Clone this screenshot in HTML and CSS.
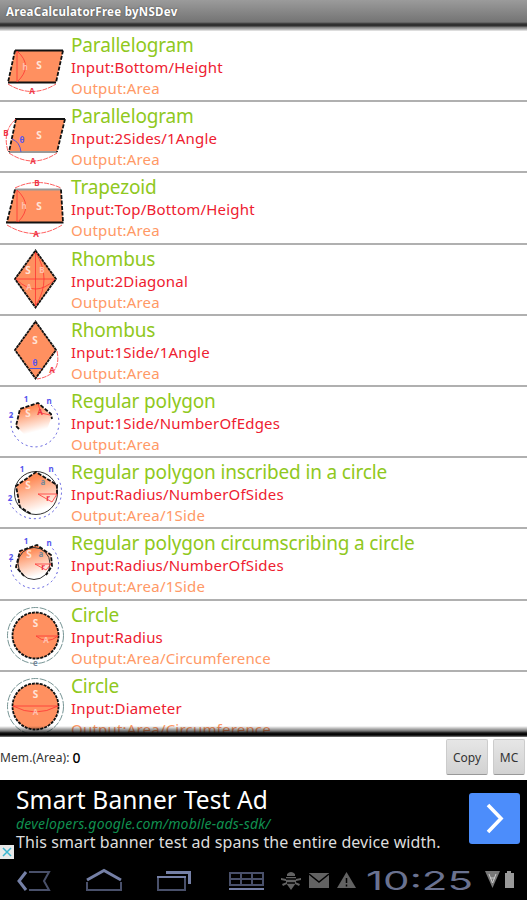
FILE: index.html
```html
<!DOCTYPE html>
<html lang="en">
<head>
    <meta charset="UTF-8">
    <meta name="viewport" content="width=device-width, initial-scale=1.0">
    <title>AreaCalculatorFree byNSDev</title>
    <link rel="stylesheet" href="styles.css">
</head>
<body>
    <header class="title-bar">AreaCalculatorFree byNSDev</header>

    <ul class="shapes">
        <li class="shape">
            <svg class="figure" viewBox="0 0 71 71">
                <path class="fill" d="M15 20.5H63L56 52.5H8Z"/>
                <path class="edge" d="M15 20.5H63M8 52.5H56"/>
                <path class="edge-dash" d="M15 20.5L8 52.5M63 20.5L56 52.5"/>
                <path class="red" d="M17 21V52M17 21Q34 36 17 52"/>
                <path class="red-dash" d="M8 54Q32 69 56 54"/>
                <text class="t-white" x="39" y="39">S</text>
                <text class="t-pink" x="25" y="40">h</text>
                <text class="t-red" x="32" y="64">A</text>
            </svg>
            <div class="info">
                <h2>Parallelogram</h2>
                <p class="input">Input:Bottom/Height</p>
                <p class="output">Output:Area</p>
            </div>
        </li>
        <li class="shape">
            <svg class="figure" viewBox="0 0 71 71">
                <path class="fill" d="M16 18H65L57 51H9Z"/>
                <path class="edge" d="M15 18H65"/>
                <path class="edge-gray" d="M9 51H57"/>
                <path class="edge-dash" d="M16 18L9 51M65 18L57 51"/>
                <path class="blue" d="M12 38Q20 41 21 51"/>
                <path class="red-dash" d="M9 52Q33 68 57 52M16 18Q2 30 8 50"/>
                <text class="t-white" x="39" y="38">S</text>
                <text class="t-blue" x="22" y="42">θ</text>
                <text class="t-red" x="6" y="35">B</text>
                <text class="t-red" x="33" y="63">A</text>
            </svg>
            <div class="info">
                <h2>Parallelogram</h2>
                <p class="input">Input:2Sides/1Angle</p>
                <p class="output">Output:Area</p>
            </div>
        </li>
        <li class="shape">
            <svg class="figure" viewBox="0 0 71 71">
                <path class="fill" d="M15 17.5H61L63 50H7Z"/>
                <path class="edge-gray" d="M15 17.5H61"/>
                <path class="edge" d="M6 50.5H63.5"/>
                <path class="edge-dash" d="M15 17.5L7 50M61 17.5L63 50"/>
                <path class="red" d="M17 18V50M17 18Q34 34 18 50"/>
                <path class="red-dash" d="M15 16Q37 5 61 16M7 53Q35 70 62 53"/>
                <text class="t-white" x="39" y="38">S</text>
                <text class="t-pink" x="24" y="37">h</text>
                <text class="t-red" x="37" y="14">B</text>
                <text class="t-red" x="36" y="65">A</text>
            </svg>
            <div class="info">
                <h2>Trapezoid</h2>
                <p class="input">Input:Top/Bottom/Height</p>
                <p class="output">Output:Area</p>
            </div>
        </li>
        <li class="shape">
            <svg class="figure" viewBox="0 0 71 71">
                <path class="fill" d="M35.5 6.5L56 35L35.5 63.5L15 35Z"/>
                <path class="edge-thin" d="M35.5 6.5L56 35L35.5 63.5L15 35Z"/>
                <path class="red" d="M35.5 8V62M16 35H55M36 9Q52 35 36 61M17 36Q36 54 54 36"/>
                <text class="t-white" x="28" y="30">S</text>
                <text class="t-pink" x="42" y="29">B</text>
                <text class="t-pink" x="29" y="46">A</text>
            </svg>
            <div class="info">
                <h2>Rhombus</h2>
                <p class="input">Input:2Diagonal</p>
                <p class="output">Output:Area</p>
            </div>
        </li>
        <li class="shape">
            <svg class="figure" viewBox="0 0 71 71">
                <path class="fill" d="M35.5 6.5L56 35L35.5 63.5L15 35Z"/>
                <path class="edge-thin" d="M35.5 6.5L56 35L35.5 63.5L15 35Z"/>
                <path class="blue" d="M30 53.5H41"/>
                <path class="red-dash" d="M57 36Q62 60 37 64"/>
                <text class="t-white" x="35" y="29">S</text>
                <text class="t-blue" x="35" y="51">θ</text>
                <text class="t-red" x="52" y="58">A</text>
            </svg>
            <div class="info">
                <h2>Rhombus</h2>
                <p class="input">Input:1Side/1Angle</p>
                <p class="output">Output:Area</p>
            </div>
        </li>
        <li class="shape">
            <svg class="figure" viewBox="0 0 71 71">
                <defs>
                    <linearGradient id="fade" x1="0.35" y1="0" x2="0.65" y2="1">
                        <stop offset="0.15" stop-color="#ff8a56"/>
                        <stop offset="0.9" stop-color="#fff"/>
                    </linearGradient>
                </defs>
                <path fill="url(#fade)" d="M16 40L20 23L38 17L52 30L46 46L24 48Z"/>
                <path class="edge-dash" d="M19 43L16 40L20 23L38 17L51 28L52 33"/>
                <path class="red" d="M38 18L41 27L50 29"/>
                <path class="blue-dot" d="M12 30A24 24 0 1 0 51 19"/>
                <text class="t-white" x="28" y="31">S</text>
                <text class="t-red" x="40" y="29">A</text>
                <text class="t-blue" x="26" y="16">1</text>
                <text class="t-blue" x="11" y="32">2</text>
                <text class="t-blue" x="49" y="18">n</text>
            </svg>
            <div class="info">
                <h2>Regular polygon</h2>
                <p class="input">Input:1Side/NumberOfEdges</p>
                <p class="output">Output:Area</p>
            </div>
        </li>
        <li class="shape">
            <svg class="figure" viewBox="0 0 71 71">
                <path fill="url(#fade)" d="M36 15L57 28V45L46 56L30 57L19 48L16 29Z"/>
                <circle class="ring" cx="36" cy="36" r="21.5"/>
                <path class="edge-dash" d="M57 37V28L36 15L16 29L20 50L31 57"/>
                <path class="red" d="M38 37H57M38 37L52 45L57 37"/>
                <path class="blue-dot" d="M10 46A27 27 0 1 0 54 16"/>
                <text class="t-white" x="28" y="32">S</text>
                <text class="t-gray" x="43" y="28">a</text>
                <text class="t-red" x="48" y="44">r</text>
                <text class="t-blue" x="22" y="15">1</text>
                <text class="t-blue" x="10" y="44">2</text>
                <text class="t-blue" x="51" y="15">n</text>
            </svg>
            <div class="info">
                <h2>Regular polygon inscribed in a circle</h2>
                <p class="input">Input:Radius/NumberOfSides</p>
                <p class="output">Output:Area/1Side</p>
            </div>
        </li>
        <li class="shape">
            <svg class="figure" viewBox="0 0 71 71">
                <path fill="url(#fade)" d="M16 39L20 23L37 17L51 27L52 38L44 49L27 51Z"/>
                <circle class="ring" cx="34" cy="35.5" r="16"/>
                <path class="edge-dash" d="M24 48L16 39L20 23L37 17L51 27L52 38L46 47"/>
                <path class="red" d="M35 36H51M35 36L46 42L51 36"/>
                <path class="blue-dot" d="M11 32A24 24 0 1 0 51 19"/>
                <text class="t-white" x="29" y="30">S</text>
                <text class="t-gray" x="41" y="29">a</text>
                <text class="t-red" x="43" y="42">r</text>
                <text class="t-blue" x="26" y="16">1</text>
                <text class="t-blue" x="11" y="32">2</text>
                <text class="t-blue" x="49" y="18">n</text>
            </svg>
            <div class="info">
                <h2>Regular polygon circumscribing a circle</h2>
                <p class="input">Input:Radius/NumberOfSides</p>
                <p class="output">Output:Area/1Side</p>
            </div>
        </li>
        <li class="shape">
            <svg class="figure" viewBox="0 0 71 71">
                <circle class="disc" cx="35.5" cy="35.5" r="23"/>
                <circle class="orbit" cx="35.5" cy="35.5" r="28"/>
                <path class="red" d="M36 36H58M36 36Q47 45 58 36"/>
                <text class="t-white" x="35.5" y="27">S</text>
                <text class="t-pink" x="46" y="43">A</text>
                <text class="t-gray" x="35.5" y="66">e</text>
            </svg>
            <div class="info">
                <h2>Circle</h2>
                <p class="input">Input:Radius</p>
                <p class="output">Output:Area/Circumference</p>
            </div>
        </li>
        <li class="shape">
            <svg class="figure" viewBox="0 0 71 71">
                <circle class="disc" cx="35.5" cy="35.5" r="23"/>
                <circle class="orbit" cx="35.5" cy="35.5" r="28"/>
                <path class="red" d="M13 35H58M13 35Q35.5 47 58 35"/>
                <text class="t-white" x="35.5" y="27">S</text>
                <text class="t-pink" x="35.5" y="44">A</text>
            </svg>
            <div class="info">
                <h2>Circle</h2>
                <p class="input">Input:Diameter</p>
                <p class="output">Output:Area/Circumference</p>
            </div>
        </li>
    </ul>

    <div class="memory">
        <span class="memory-label">Mem.(Area):</span>
        <span class="memory-value">0</span>
        <button class="btn btn-copy">Copy</button>
        <button class="btn btn-mc">MC</button>
    </div>

    <div class="ad">
        <div class="ad-text">
            <div class="ad-title">Smart Banner Test Ad</div>
            <div class="ad-link">developers.google.com/mobile-ads-sdk/</div>
            <div class="ad-desc">This smart banner test ad spans the entire device width.</div>
        </div>
        <div class="ad-go">
            <svg width="51" height="51" viewBox="0 0 51 51"><path d="M19 12L32 25.5L19 39" fill="none" stroke="#fff" stroke-width="3.6"/></svg>
        </div>
        <svg class="ad-close" viewBox="0 0 14 14"><path d="M3 3L11 11M11 3L3 11" stroke="#3bb5cf" stroke-width="1.5"/></svg>
    </div>

    <!-- System bar -->
    <nav class="system-bar">
        <svg class="system-icons" width="527" height="40" viewBox="0 860 527 40">
            <g fill="none" stroke="#49506a" stroke-width="2">
                <path d="M29 872H49L44 881L49 890H29"/>
                <path d="M87 882V890H121V882"/>
                <path d="M158 877H185V890H158Z"/>
                <path d="M230 873H263V885H230ZM241 873V885M252 873V885M230 879H263"/>
            </g>
            <g fill="none" stroke="#7580a6" stroke-width="3">
                <path d="M26 872L19 881L26 890"/>
                <path d="M87 880L104 870.5L121 880"/>
                <path d="M157 877H186" stroke-width="2"/>
                <path d="M166 872.5H189.5V884"/>
                <path d="M229 889H264" stroke-width="2"/>
            </g>
            <g fill="#626262">
                <path d="M287 874Q291 870 295 874V876H287ZM286 877H296V883L291 890L286 883Z"/>
                <path d="M281 878L286 879V881L281 880ZM301 878L296 879V881L301 880ZM282 884L287 882V884L283 886ZM300 884L295 882V884L299 886Z"/>
                <path d="M309 873H329V888H309Z"/>
                <path d="M346.5 872L356 888H337Z"/>
            </g>
            <path d="M309 874L319 882L329 874M346.5 878V883M346.5 884.5V886.5M286 879H296M287 883H295" fill="none" stroke="#000" stroke-width="1.5"/>
            <path d="M485 871H500L492.5 888Z" fill="#777"/>
            <path d="M489 874L492.5 883L496 874M490 878H495" fill="none" stroke="#ccc"/>
            <path d="M507 871H511V873H514V888H505V873H507Z" fill="#999"/>
            <text class="clock" x="366" y="889.5" textLength="107" lengthAdjust="spacingAndGlyphs">10:25</text>
        </svg>
    </nav>
</body>
</html>
```
FILE: styles.css
```css
* {
    box-sizing: border-box;
}
body {
    display: flex;
    flex-direction: column;
    height: 900px;
    margin: 0;
    overflow: hidden;
    background-color: #fff;
    font-family: "Noto Sans", "Open Sans", sans-serif;
}

/* Title bar */
.title-bar {
    flex: none;
    height: 31px;
    padding-left: 6px;
    background: linear-gradient(#9b9b9b 0, #747474 22px, #303030 24px, #303030 26px, #777 27px, #aaa 29px, #eee 31px);
    color: #fff;
    font-size: 11.5px;
    font-weight: bold;
    letter-spacing: 0.28px;
    line-height: 23px;
    white-space: nowrap;
    text-shadow: 0 0 2px #444;
}

/* List of figures */
.shapes {
    position: relative;
    flex: none;
    height: 706px;
    margin: 0;
    padding: 0;
    overflow: hidden;
    list-style: none;
}
.shapes::after {
    content: "";
    position: absolute;
    left: 0;
    right: 0;
    bottom: 0;
    height: 11px;
    background: linear-gradient(transparent 0, rgba(0, 0, 0, 0.55) 5px, #111 7px, #000 9px, #888 11px);
}
.shape {
    display: flex;
    height: 71.2px;
    border-bottom: 2px solid #b0b0b0;
}
.figure {
    flex: none;
    width: 71px;
    height: 71px;
    margin-top: -1px;
}
.info {
    white-space: nowrap;
}
.info h2 {
    margin: 2px 0 0;
    color: #8fc820;
    font-size: 19px;
    font-weight: normal;
    letter-spacing: -0.16px;
    line-height: 24px;
}
.info p {
    margin: 0;
    font-size: 15px;
    letter-spacing: 0.2px;
    line-height: 21px;
}
.info .input {
    color: #ee2030;
}
.info .output {
    color: #ff9966;
}

/* Figure drawing */
.fill {
    fill: #ff9060;
}
.edge,
.edge-gray,
.edge-thin,
.edge-dash {
    fill: none;
    stroke: #111;
    stroke-width: 1.8;
}
.edge-gray {
    stroke: #999;
}
.edge-thin {
    stroke-dasharray: 3 0.6;
}
.edge-dash {
    stroke-dasharray: 4 1.5;
}
.red,
.red-dash {
    fill: none;
    stroke: #f33;
    stroke-width: 0.8;
}
.red-dash {
    stroke-dasharray: 5 1;
}
.blue,
.blue-dot {
    fill: none;
    stroke: #55d;
    stroke-width: 1;
}
.blue-dot {
    stroke-dasharray: 2 3;
}
.ring {
    fill: none;
    stroke: #333;
    stroke-width: 1;
}
.disc {
    fill: #ff9060;
    stroke: #111;
    stroke-width: 1.8;
    stroke-dasharray: 3 1;
}
.orbit {
    fill: none;
    stroke: #688;
    stroke-width: 0.9;
    stroke-dasharray: 7 1.5;
}
.figure text {
    font-size: 8px;
    font-weight: bold;
    text-anchor: middle;
}
.figure .t-white {
    fill: #ffe4d8;
    font-size: 10px;
}
.t-pink {
    fill: #ffc0b0;
}
.t-red {
    fill: #ee3344;
}
.t-blue {
    fill: #5555ee;
}
.t-gray {
    fill: #789;
}

/* Memory row */
.memory {
    display: flex;
    flex: none;
    align-items: flex-start;
    height: 43px;
    padding-top: 2px;
    color: #333;
    font-size: 12px;
    line-height: 38px;
}
.memory-label {
    letter-spacing: 0.1px;
}
.memory-value {
    flex: 1;
    margin-left: 3px;
    color: #000;
    font-size: 14px;
    font-weight: 500;
}
.btn {
    height: 36px;
    padding: 0;
    border: 1px solid #ccc;
    border-bottom-color: #999;
    border-radius: 2px;
    background: linear-gradient(#e6e6e6, #d2d2d2);
    color: #333;
    font-family: inherit;
    font-size: 12px;
}
.btn-copy {
    width: 42px;
    margin-right: 5px;
}
.btn-mc {
    width: 32px;
    margin-right: 2px;
}

/* Banner */
.ad {
    position: relative;
    display: flex;
    flex: none;
    justify-content: space-between;
    height: 80px;
    padding: 4px 7px 0 16px;
    background-color: #000;
    color: #fff;
    white-space: nowrap;
}
.ad-title {
    font-size: 24.5px;
    letter-spacing: 0.15px;
    line-height: 31px;
}
.ad-link {
    color: #109050;
    font-size: 14px;
    font-style: italic;
    letter-spacing: 0.2px;
    line-height: 17px;
}
.ad-desc {
    color: #ddd;
    font-size: 16px;
    letter-spacing: 0.08px;
    line-height: 20px;
}
.ad-go {
    width: 51px;
    height: 51px;
    margin-top: 9px;
    border-radius: 3px;
    background-color: #4c8dfb;
}
.ad-close {
    position: absolute;
    left: 0;
    bottom: 1px;
    width: 14px;
    height: 14px;
    background-color: #e8e8e8;
}

/* System bar */
.system-bar {
    flex: none;
    height: 40px;
    background-color: #000;
}
.system-icons {
    display: block;
}
.clock {
    fill: #6a7290;
    font-family: "Inter", sans-serif;
    font-size: 26px;
    font-weight: 400;
}
```
